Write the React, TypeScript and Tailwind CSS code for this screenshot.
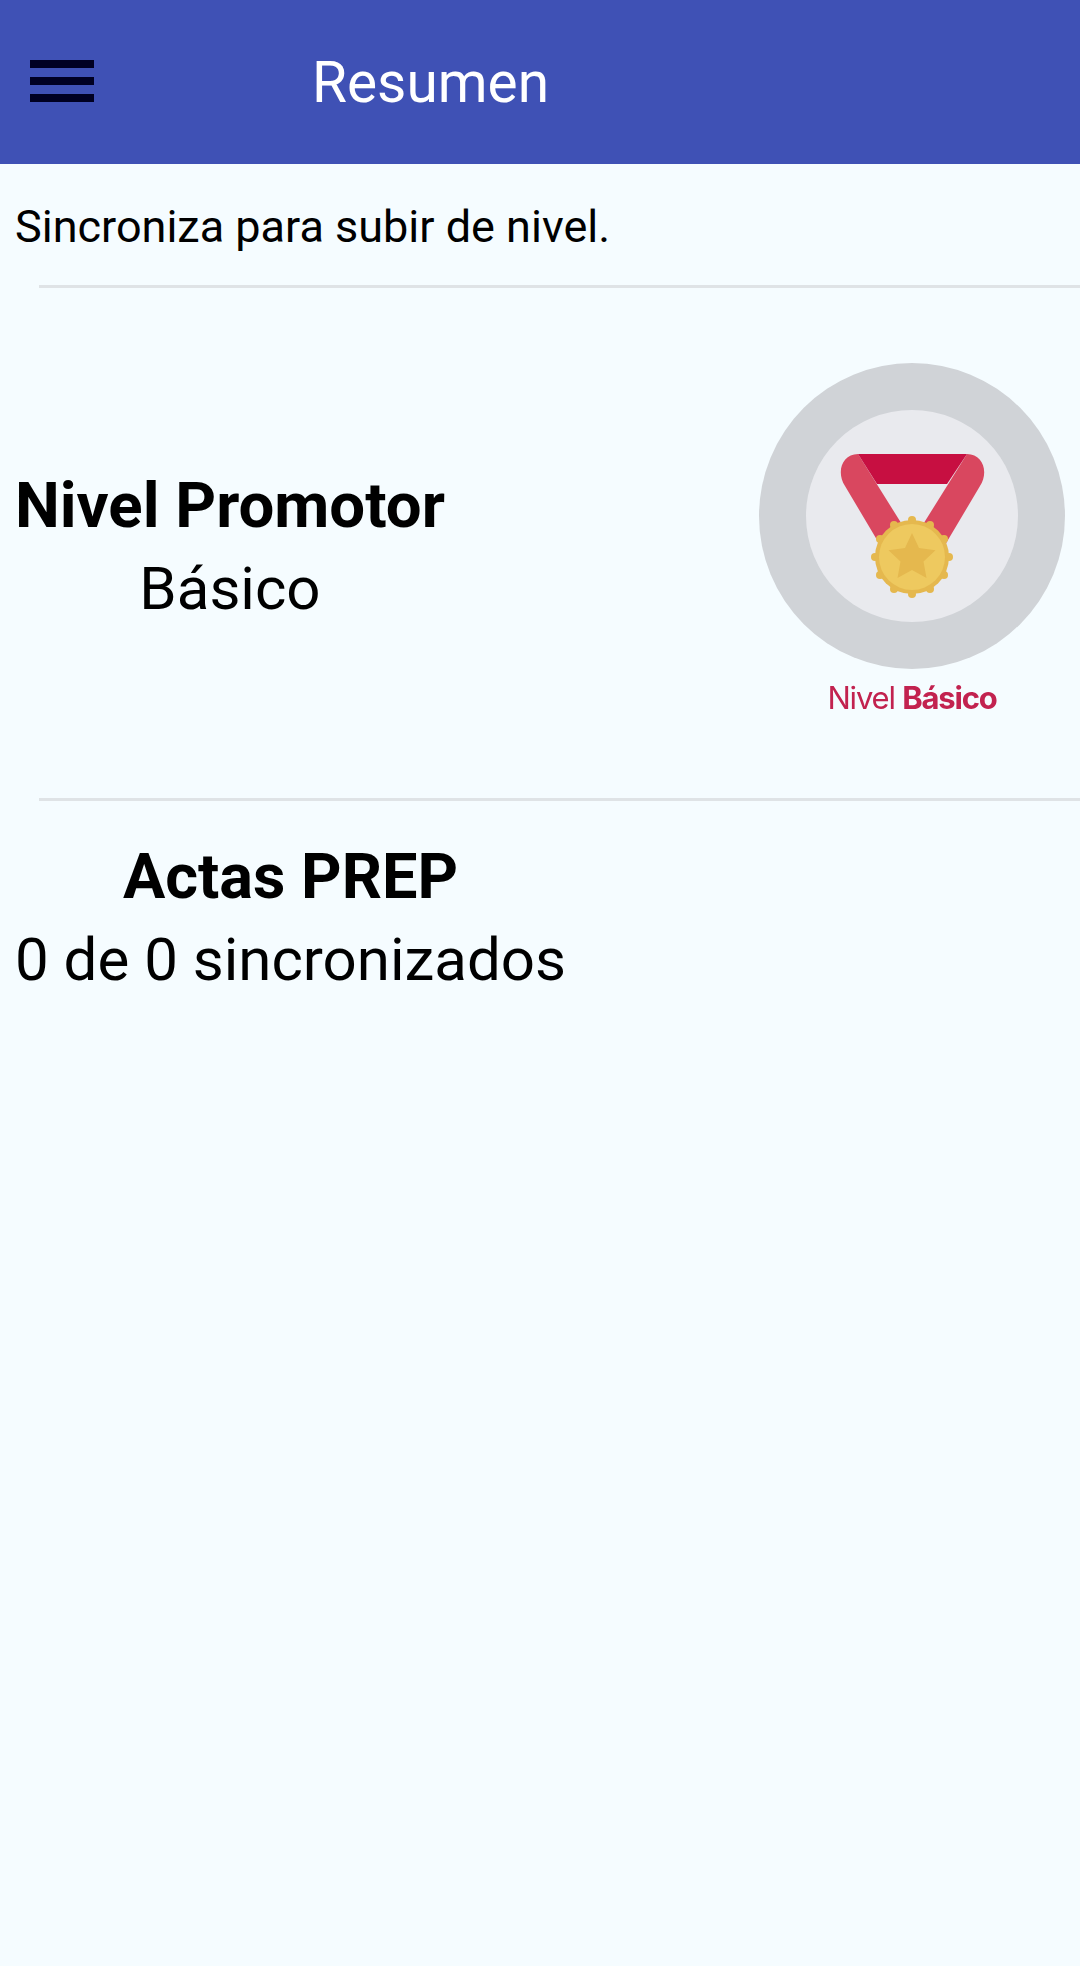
const roboto = { fontFamily: "Roboto, sans-serif" }

function Medal() {
  return (
    <svg viewBox="0 0 308 308" className="w-[308px] h-[308px] blur-[0.6px]">
      <circle cx="154" cy="154" r="153" fill="#d0d3d7" />
      <circle cx="154" cy="154" r="106" fill="#e9eaee" />
      <path d="M100 92C84 92 78 110 87 124L125 188 150 172z" fill="#d9475f" />
      <path d="M209 92C225 92 231 110 222 124L184 188 159 172z" fill="#d9475f" />
      <path d="M100 92H209L189 122H119z" fill="#c70f41" />
      <circle cx="154" cy="195" r="37" fill="#e5b84e" />
      <g fill="#e5b84e">
        <circle cx="154" cy="158" r="4" />
        <circle cx="172" cy="163" r="4" />
        <circle cx="186" cy="177" r="4" />
        <circle cx="191" cy="195" r="4" />
        <circle cx="186" cy="213" r="4" />
        <circle cx="172" cy="227" r="4" />
        <circle cx="154" cy="232" r="4" />
        <circle cx="136" cy="227" r="4" />
        <circle cx="122" cy="213" r="4" />
        <circle cx="117" cy="195" r="4" />
        <circle cx="122" cy="177" r="4" />
        <circle cx="136" cy="163" r="4" />
      </g>
      <circle cx="154" cy="195" r="33" fill="#eec95f" />
      <path d="M154 171l7 15 16.5 2.2-12 11.4 3 16.4-14.5-8-14.5 8 3-16.4-12-11.4 16.5-2.2z" fill="#e5b84e" />
    </svg>
  )
}

export default function App() {
  return (
    <div className="min-h-[1966px] bg-[#f5fcff] text-black" style={roboto}>
      <header className="h-[164px] bg-[#3f51b5] flex items-center">
        <div className="ml-[30px] w-[64px] flex flex-col gap-[9px] mb-[2px]">
          <div className="h-[8px] bg-[#000022]" />
          <div className="h-[8px] bg-[#000022]" />
          <div className="h-[8px] bg-[#000022]" />
        </div>
        <h1 className="ml-[218px] mt-[3px] text-[56.8px] leading-none text-white font-normal">Resumen</h1>
      </header>

      <p className="pl-[15px] pt-[38px] h-[121px] text-[45px] leading-[50px]">Sincroniza para subir de nivel.</p>
      <div className="ml-[39px] h-[3px] bg-[#dfe3e6]" />

      <section className="h-[510px] flex justify-between">
        <div className="pl-[15px] pt-[176px] flex flex-col items-start">
          <div className="text-center">
            <div className="text-[63.5px] leading-[83px] font-bold">Nivel Promotor</div>
            <div className="text-[60px] leading-[84px]">Básico</div>
          </div>
        </div>
        <div className="pt-[74px] pr-[14px] flex flex-col items-center">
          <Medal />
          <div className="mt-[11px] text-[31px] leading-[34px] text-[#c2224f] blur-[0.4px]" style={{ fontFamily: "Inter, sans-serif", letterSpacing: "-1.2px" }}>
            Nivel <span className="font-bold">Básico</span>
          </div>
        </div>
      </section>

      <div className="ml-[39px] h-[3px] bg-[#dfe3e6]" />

      <section className="pl-[15px] pt-[34px] flex">
        <div className="text-center">
          <div className="text-[63px] leading-[83px] font-bold">Actas PREP</div>
          <div className="text-[60px] leading-[84px]">0 de 0 sincronizados</div>
        </div>
      </section>
    </div>
  )
}
